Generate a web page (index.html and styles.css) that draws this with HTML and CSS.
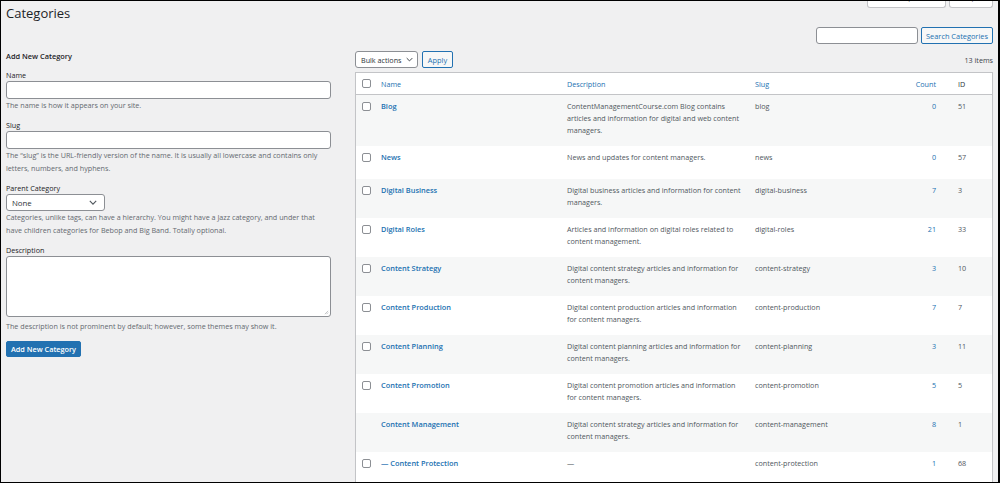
FILE: index.html
```html
<!DOCTYPE html>
<html lang="en">
<head>
<meta charset="utf-8">
<title>Categories</title>
<link rel="stylesheet" href="styles.css">
</head>
<body>
<div class="frame">
  <header class="page-head">
    <h1 class="page-title">Categories</h1>
    <div class="screen-meta">
      <button class="meta-btn meta-btn-wide" type="button">Screen Options ▾</button>
      <button class="meta-btn meta-btn-help" type="button">Help ▾</button>
    </div>
  </header>

  <div class="cols">
    <div class="col-left">
      <h2 class="form-title">Add New Category</h2>
      <div class="field">
        <label class="field-label">Name</label>
        <input class="text-input" type="text">
        <p class="help">The name is how it appears on your site.</p>
      </div>
      <div class="field">
        <label class="field-label">Slug</label>
        <input class="text-input" type="text">
        <p class="help">The “slug” is the URL-friendly version of the name. It is usually all lowercase and contains only letters, numbers, and hyphens.</p>
      </div>
      <div class="field">
        <label class="field-label">Parent Category</label>
        <div class="select select-parent"><span>None</span><svg class="chev" viewBox="0 0 10 6" width="8" height="5"><path d="M1 1l4 4 4-4" fill="none" stroke="#50575e" stroke-width="1.4"/></svg></div>
        <p class="help">Categories, unlike tags, can have a hierarchy. You might have a Jazz category, and under that have children categories for Bebop and Big Band. Totally optional.</p>
      </div>
      <div class="field">
        <label class="field-label">Description</label>
        <div class="textarea"><svg class="grip" viewBox="0 0 6 6" width="5" height="5"><path d="M5 1L1 5M5 3L3 5" stroke="#a7aaad" stroke-width="0.8"/></svg></div>
        <p class="help help-tight">The description is not prominent by default; however, some themes may show it.</p>
      </div>
      <button class="btn-primary" type="button">Add New Category</button>
    </div>

    <div class="col-right">
      <div class="search-row">
        <input class="search-input" type="text">
        <button class="btn-secondary btn-search" type="button">Search Categories</button>
      </div>
      <div class="tablenav">
        <div class="bulk">
          <div class="select select-bulk"><span>Bulk actions</span><svg class="chev" viewBox="0 0 10 6" width="7" height="5"><path d="M1 1l4 4 4-4" fill="none" stroke="#3c434a" stroke-width="1.4"/></svg></div>
          <button class="btn-secondary btn-apply" type="button">Apply</button>
        </div>
        <span class="count-items">13 items</span>
      </div>

      <table class="list">
        <colgroup>
          <col class="c-check"><col class="c-name"><col class="c-desc"><col class="c-slug"><col class="c-count"><col class="c-id">
        </colgroup>
        <thead>
          <tr>
            <th class="check"><input class="cb" type="checkbox"></th>
            <th><a class="head-link">Name</a></th>
            <th><a class="head-link">Description</a></th>
            <th><a class="head-link">Slug</a></th>
            <th class="num"><a class="head-link">Count</a></th>
            <th class="idc">ID</th>
          </tr>
        </thead>
        <tbody>
          <tr class="alt">
            <td class="check"><input class="cb" type="checkbox"></td>
            <td class="name"><a class="row-title">Blog</a><div class="row-actions"></div></td>
            <td class="desc">ContentManagementCourse.com Blog contains articles and information for digital and web content managers.</td>
            <td>blog</td>
            <td class="num"><a class="count-link">0</a></td>
            <td class="idc">51</td>
          </tr>
          <tr>
            <td class="check"><input class="cb" type="checkbox"></td>
            <td class="name"><a class="row-title">News</a><div class="row-actions"></div></td>
            <td class="desc">News and updates for content managers.</td>
            <td>news</td>
            <td class="num"><a class="count-link">0</a></td>
            <td class="idc">57</td>
          </tr>
          <tr class="alt">
            <td class="check"><input class="cb" type="checkbox"></td>
            <td class="name"><a class="row-title">Digital Business</a><div class="row-actions"></div></td>
            <td class="desc">Digital business articles and information for content managers.</td>
            <td>digital-business</td>
            <td class="num"><a class="count-link">7</a></td>
            <td class="idc">3</td>
          </tr>
          <tr>
            <td class="check"><input class="cb" type="checkbox"></td>
            <td class="name"><a class="row-title">Digital Roles</a><div class="row-actions"></div></td>
            <td class="desc">Articles and information on digital roles related to content management.</td>
            <td>digital-roles</td>
            <td class="num"><a class="count-link">21</a></td>
            <td class="idc">33</td>
          </tr>
          <tr class="alt">
            <td class="check"><input class="cb" type="checkbox"></td>
            <td class="name"><a class="row-title">Content Strategy</a><div class="row-actions"></div></td>
            <td class="desc">Digital content strategy articles and information for content managers.</td>
            <td>content-strategy</td>
            <td class="num"><a class="count-link">3</a></td>
            <td class="idc">10</td>
          </tr>
          <tr>
            <td class="check"><input class="cb" type="checkbox"></td>
            <td class="name"><a class="row-title">Content Production</a><div class="row-actions"></div></td>
            <td class="desc">Digital content production articles and information for content managers.</td>
            <td>content-production</td>
            <td class="num"><a class="count-link">7</a></td>
            <td class="idc">7</td>
          </tr>
          <tr class="alt">
            <td class="check"><input class="cb" type="checkbox"></td>
            <td class="name"><a class="row-title">Content Planning</a><div class="row-actions"></div></td>
            <td class="desc">Digital content planning articles and information for content managers.</td>
            <td>content-planning</td>
            <td class="num"><a class="count-link">3</a></td>
            <td class="idc">11</td>
          </tr>
          <tr>
            <td class="check"><input class="cb" type="checkbox"></td>
            <td class="name"><a class="row-title">Content Promotion</a><div class="row-actions"></div></td>
            <td class="desc">Digital content promotion articles and information for content managers.</td>
            <td>content-promotion</td>
            <td class="num"><a class="count-link">5</a></td>
            <td class="idc">5</td>
          </tr>
          <tr class="alt">
            <td class="check"></td>
            <td class="name"><a class="row-title">Content Management</a><div class="row-actions"></div></td>
            <td class="desc">Digital content strategy articles and information for content managers.</td>
            <td>content-management</td>
            <td class="num"><a class="count-link">8</a></td>
            <td class="idc">1</td>
          </tr>
          <tr>
            <td class="check"><input class="cb" type="checkbox"></td>
            <td class="name"><a class="row-title">— Content Protection</a><div class="row-actions"></div></td>
            <td class="desc">—</td>
            <td>content-protection</td>
            <td class="num"><a class="count-link">1</a></td>
            <td class="idc">68</td>
          </tr>
        </tbody>
      </table>
    </div>
  </div>
</div>
</body>
</html>
```

FILE: styles.css
```css
* { box-sizing: border-box; }

body {
  margin: 0;
  font-family: "Open Sans", "Noto Sans", sans-serif;
  font-size: 7.2px;
  color: #3c434a;
}

.frame {
  width: 1000px;
  height: 483px;
  border: 1px solid #000;
  border-right-width: 2px;
  background: #f0f0f1;
  overflow: hidden;
  padding: 0 5px;
}

/* header */
.page-head {
  display: flex;
  justify-content: space-between;
  align-items: flex-start;
  height: 26px;
}
.page-title {
  margin: 2px 0 0;
  font-size: 13px;
  line-height: 20px;
  font-weight: 400;
  color: #1d2327;
}
.screen-meta {
  display: flex;
  gap: 3px;
  margin-top: -13px;
}
.meta-btn {
  height: 20px;
  padding: 0 8px;
  border: 1px solid #c3c4c7;
  border-top: none;
  border-radius: 0 0 3px 3px;
  background: #fff;
  color: #646970;
  font: inherit;
  font-size: 7.2px;
  line-height: 17px;
}
.meta-btn-wide { width: 79px; }
.meta-btn-help { width: 44px; }

/* columns */
.cols {
  display: flex;
  gap: 24px;
  align-items: flex-start;
}
.col-left { width: 325px; flex: none; }
.col-right { flex: 1; min-width: 0; }

/* left form */
.form-title {
  margin: 23px 0 0;
  font-size: 7.4px;
  line-height: 12px;
  font-weight: 600;
  color: #1d2327;
}
.field { margin-top: 7px; }
.field-label {
  display: block;
  line-height: 12px;
  color: #1d2327;
}
.text-input {
  display: block;
  width: 100%;
  height: 18px;
  margin: 0;
  border: 1px solid #8c8f94;
  border-radius: 3px;
  background: #fff;
}
.help {
  margin: 0;
  line-height: 13px;
  color: #646970;
}
.help-tight { margin-top: 3px; }

.select {
  display: flex;
  align-items: center;
  justify-content: space-between;
  height: 17px;
  border: 1px solid #8c8f94;
  border-radius: 3px;
  background: #fff;
  color: #2c3338;
}
.select-parent { width: 99px; padding: 0 7px 0 5px; font-size: 7.8px; }
.select-bulk { width: 63px; padding: 0 4px 0 5px; }

.textarea {
  position: relative;
  height: 61px;
  border: 1px solid #8c8f94;
  border-radius: 3px;
  background: #fff;
}
.grip { position: absolute; right: 1px; bottom: 1px; }

.btn-primary {
  display: block;
  margin-top: 8px;
  width: 75px;
  height: 16px;
  padding: 0;
  border: 1px solid #2271b1;
  border-radius: 2px;
  background: #2271b1;
  color: #fff;
  font: inherit;
  font-size: 7.3px;
  font-weight: 600;
}

/* right side */
.search-row {
  display: flex;
  justify-content: flex-end;
  gap: 3px;
  height: 17px;
}
.search-input {
  width: 102px;
  height: 17px;
  margin: 0;
  border: 1px solid #8c8f94;
  border-radius: 3px;
  background: #fff;
}
.btn-secondary {
  height: 17px;
  padding: 0;
  border: 1px solid #2271b1;
  border-radius: 2px;
  background: #f6f7f7;
  color: #2271b1;
  font: inherit;
  font-size: 7.4px;
}
.btn-search { width: 72px; }
.btn-apply { width: 31px; }

.tablenav {
  display: flex;
  justify-content: space-between;
  align-items: center;
  height: 17px;
  margin-top: 7px;
}
.bulk { display: flex; gap: 4px; }
.count-items { color: #3c434a; }

.list {
  width: 100%;
  margin-top: 4px;
  table-layout: fixed;
  border-collapse: separate;
  border-spacing: 0;
  border: 1px solid #c3c4c7;
  background: #fff;
  box-shadow: 0 1px 1px rgba(0,0,0,.04);
}
.c-check { width: 19px; }
.c-name { width: 186px; }
.c-desc { width: 188px; }
.c-slug { width: 149px; }
.c-count { width: 50px; }
.c-id { width: 44px; }

.list th {
  text-align: left;
  font-weight: 400;
  color: #2c3338;
  padding: 5px 6px 4px;
  line-height: 12px;
  border-bottom: 1px solid #c3c4c7;
  vertical-align: top;
}
.head-link { color: #2271b1; }
.list td {
  padding: 5px 6px 10px;
  line-height: 12px;
  vertical-align: top;
  color: #50575e;
}
.list td.desc { padding-right: 3px; }
.list tr.alt td { background: #f6f7f7; }
.count-link { color: #2271b1; }

.list th.check { padding: 6px 0 0 6px; }
.list td.check { padding: 7px 0 0 6px; }
.cb {
  appearance: none;
  -webkit-appearance: none;
  display: block;
  width: 9px;
  height: 9px;
  margin: 0;
  border: 1px solid #8c8f94;
  border-radius: 2px;
  background: #fff;
}

.row-title {
  font-weight: 600;
  font-size: 7.4px;
  color: #2271b1;
}
.row-actions { height: 6px; }

.list .num { text-align: right; padding-right: 12px; }
.list .idc { padding-left: 10px; }
```
